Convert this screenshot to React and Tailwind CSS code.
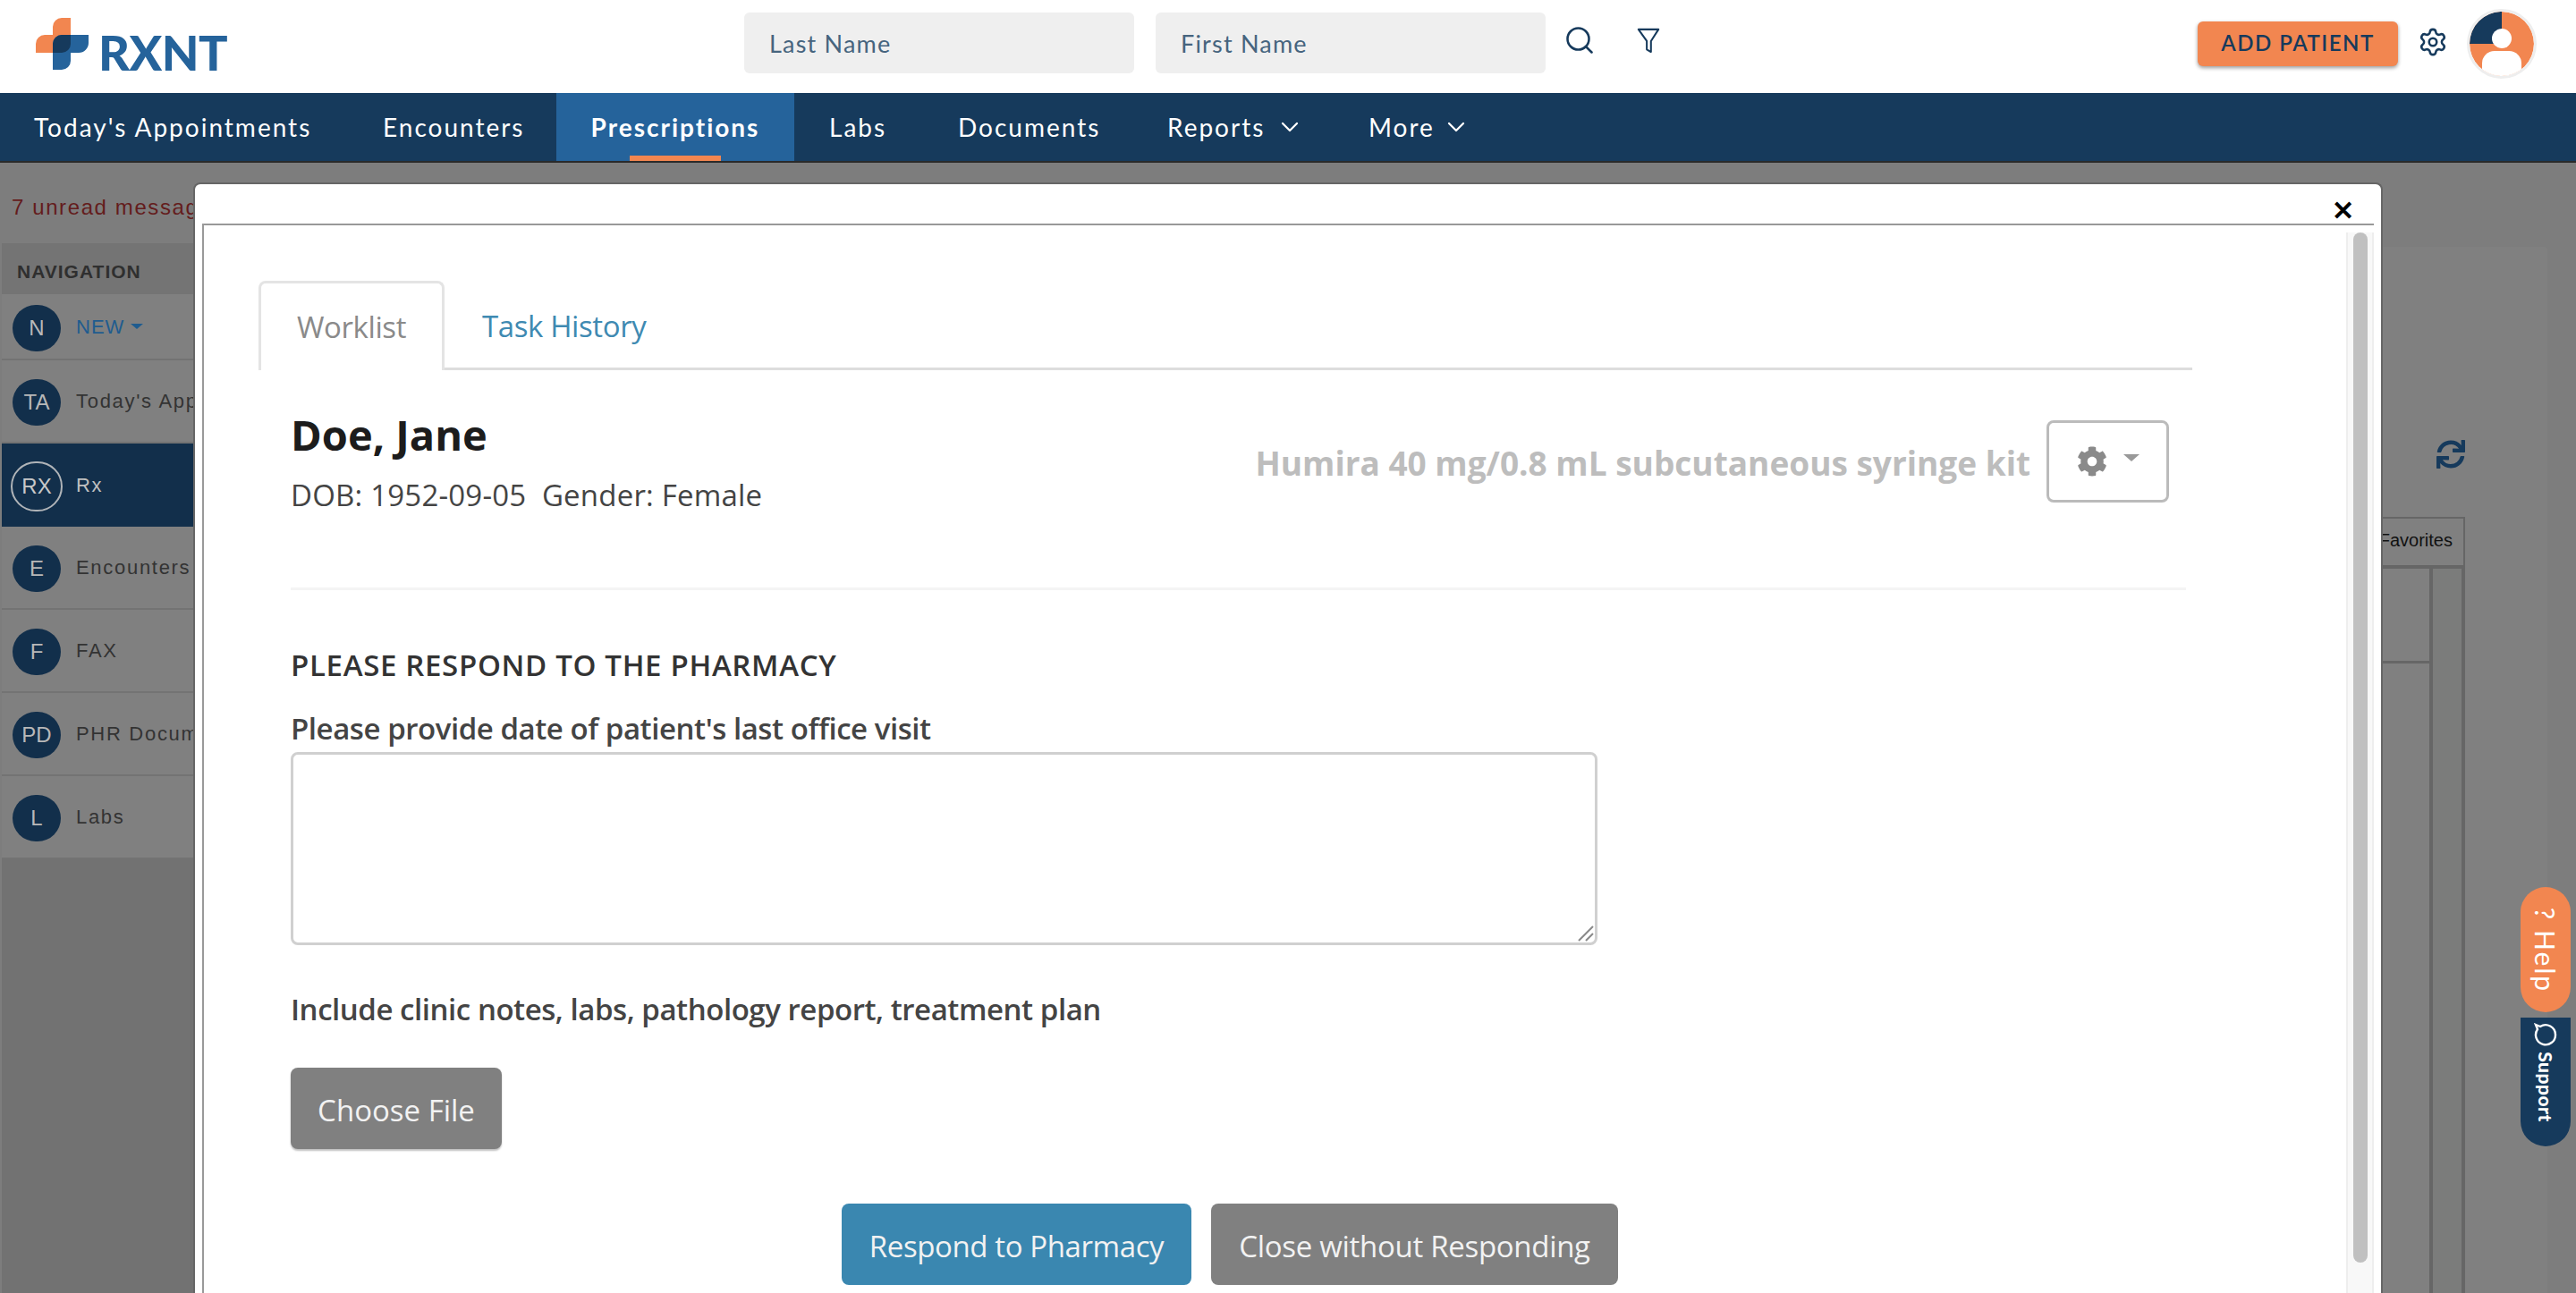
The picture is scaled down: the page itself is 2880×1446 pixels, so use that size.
import { ChevronDown, Settings, Search } from "lucide-react";
import { FaCog, FaSync } from "react-icons/fa";

const navItems = [
  { initials: "TA", label: "Today's Appointments" },
  { initials: "RX", label: "Rx", active: true },
  { initials: "E", label: "Encounters" },
  { initials: "F", label: "FAX" },
  { initials: "PD", label: "PHR Documents" },
  { initials: "L", label: "Labs" },
];

function Logo() {
  return (
    <div className="flex items-center ml-[40px] mt-[-6px]">
      <svg width="59" height="58" viewBox="0 0 59 58">
        <path d="M29 0h10v39H0V29a10 10 0 0 1 10-10h9V10A10 10 0 0 1 29 0z" fill="#f28650" />
        <path d="M29 19h30v9a11 11 0 0 1-11 11h-9v9a10 10 0 0 1-10 10H19V29a10 10 0 0 1 10-10z" fill="#25639b" />
        <path d="M29 19h10v10a10 10 0 0 1-10 10H19V29a10 10 0 0 1 10-10z" fill="#163a5c" />
      </svg>
      <span className="ml-[11px] mt-[19px] font-['Lato',sans-serif] font-black text-[54px] leading-[54px] tracking-[-0.5px] text-[#25639b]">RXNT</span>
    </div>
  );
}

function Header() {
  return (
    <header className="h-[104px] bg-white flex items-center font-['Lato',sans-serif]">
      <div className="w-[832px] shrink-0">
        <Logo />
      </div>
      <input placeholder="Last Name" className="w-[436px] h-[68px] mt-[-8px] rounded-[6px] bg-[#efefef] pl-[28px] text-[27px] tracking-[1.2px] placeholder:text-[#46647e]" />
      <input placeholder="First Name" className="w-[436px] h-[68px] mt-[-8px] ml-[24px] rounded-[6px] bg-[#efefef] pl-[28px] text-[27px] tracking-[1.2px] placeholder:text-[#46647e]" />
      <Search size={36} strokeWidth={1.7} className="ml-[20px] mt-[-14px] text-[#163a5c]" />
      <svg width="28" height="32" viewBox="0 0 30 32" fill="none" stroke="#163a5c" strokeWidth="2.2" strokeLinejoin="round" className="ml-[45px] mt-[-14px]">
        <path d="M3 3h24l-9 14v13l-5-3V17z" />
      </svg>
      <button className="ml-auto w-[224px] h-[50px] mt-[-6px] rounded-[6px] bg-[#f28650] text-[#163a5c] text-[24px] leading-[46px] pb-[2px] font-semibold tracking-[1.5px] shadow-[0_2px_4px_rgba(0,0,0,0.4)]">
        ADD PATIENT
      </button>
      <Settings size={34} strokeWidth={1.8} className="ml-[22px] mt-[-10px] text-[#163a5c]" />
      <div className="ml-[21px] mr-[44px] mt-[-6px] w-[78px] h-[78px] rounded-full border-[3px] border-[#eeeeee] overflow-hidden">
        <svg width="72" height="72" viewBox="0 0 72 72">
          <circle cx="36" cy="36" r="36" fill="#f28650" />
          <path d="M36 36V0A36 36 0 0 0 0 36z" fill="#163a5c" />
          <circle cx="36" cy="30" r="11" fill="#fff" />
          <rect x="14" y="44" width="44" height="40" rx="14" fill="#fff" />
        </svg>
      </div>
    </header>
  );
}

function TopNav() {
  return (
    <nav className="h-[78px] bg-[#163a5c] border-b-[2px] border-[#2a2a2a] flex text-white text-[28px] tracking-[2px] font-['Lato',sans-serif]">
      <a className="ml-[38px] w-[390px] flex items-center">Today's Appointments</a>
      <a className="w-[194px] flex items-center">Encounters</a>
      <a className="relative w-[266px] flex items-center justify-center bg-[#25639b] font-bold">
        Prescriptions
        <span className="absolute left-[82px] bottom-0 w-[102px] h-[6px] bg-[#f28650]" />
      </a>
      <a className="ml-[39px] w-[144px] flex items-center">Labs</a>
      <a className="w-[234px] flex items-center">Documents</a>
      <a className="w-[225px] flex items-center">
        Reports
        <ChevronDown size={32} strokeWidth={1.7} className="ml-[12px]" />
      </a>
      <a className="flex items-center">
        More
        <ChevronDown size={32} strokeWidth={1.7} className="ml-[8px]" />
      </a>
    </nav>
  );
}

function Circle({ initials, active }) {
  return (
    <span className={active
      ? "w-[58px] h-[56px] ml-[10px] mt-[3px] rounded-full border-[2px] border-[#b0b4b8] flex items-center justify-center text-[24px] text-[#c8c8c8] shrink-0"
      : "w-[54px] h-[52px] ml-[12px] mt-[3px] rounded-full bg-[#122f4b] flex items-center justify-center text-[24px] text-[#b8b8b8] shrink-0"}>
      {initials}
    </span>
  );
}

function Sidebar() {
  return (
    <aside className="w-[218px] shrink-0 flex flex-col font-['Liberation_Sans',sans-serif]">
      <div className="h-[90px] pl-[13px] pt-[36px] text-[24px] leading-[28px] tracking-[1.6px] text-[#641c1c] whitespace-nowrap">7 unread messages</div>
      <div className="h-[57px] ml-[2px] bg-[#747474] pl-[17px] pt-[6px] flex items-center text-[21px] font-bold tracking-[1px] text-[#2f2f2f]">NAVIGATION</div>
      <div className="h-[74px] ml-[2px] flex items-center border-b-[2px] border-[#737373] bg-[#808080]">
        <Circle initials="N" />
        <span className="ml-[17px] text-[22px] tracking-[1px] text-[#1f5c8f]">NEW</span>
        <span className="ml-[7px] border-x-[7px] border-t-[6px] border-x-transparent border-t-[#1f5c8f]" />
      </div>
      {navItems.map((item) => (
        <div
          key={item.initials}
          className={item.active
            ? "h-[93px] ml-[2px] flex items-center bg-[#122f4b] whitespace-nowrap"
            : "h-[93px] ml-[2px] flex items-center border-b-[2px] border-[#737373] bg-[#808080] whitespace-nowrap"}
        >
          <Circle initials={item.initials} active={item.active} />
          <span className={item.active
            ? "ml-[15px] text-[22px] tracking-[1.7px] text-[#c0c0c0]"
            : "ml-[17px] text-[22px] tracking-[1.7px] text-[#333333]"}>
            {item.label}
          </span>
        </div>
      ))}
      <div className="flex-1 ml-[2px] bg-[#727272]" />
    </aside>
  );
}

function MainBehind() {
  return (
    <main className="flex-1 relative">
      <div className="absolute right-[32px] top-[94px] bottom-0 left-0 bg-[#808080] rounded-t-[4px]" />
      <FaSync size={32} className="absolute left-[2506px] top-[310px] text-[#163a5c]" />
      <div className="absolute left-[2444px] top-[396px] w-[94px] h-[58px] border-[2px] border-b-[4px] border-[#666666] flex items-center justify-end pr-[12px] pb-[4px] text-[20px] text-[#111111] font-['Liberation_Sans',sans-serif]">Favorites</div>
      <div className="absolute left-[2498px] top-[454px] bottom-0 w-[40px] border-x-[4px] border-[#666666] bg-[#7b7c7b]" />
      <div className="absolute left-[2444px] top-[557px] w-[54px] h-[3px] bg-[#666666]" />
    </main>
  );
}

function Modal() {
  return (
    <div className="absolute left-[216px] top-[22px] w-[2448px] h-[1300px] bg-white rounded-t-[8px] border-[2px] border-b-0 border-[#666666] pt-[44px] pl-[8px] pr-[8px] font-['Open_Sans',sans-serif]">
      <span className="absolute right-[30px] top-[15px] text-[30px] leading-[30px] font-bold text-black font-['Liberation_Sans',sans-serif]">✕</span>
      <div className="relative h-full border-t-[2px] border-l-[2px] border-[#999999] pt-[62px] pl-[61px]">
        <div className="absolute right-0 top-[8px] bottom-0 w-[31px] bg-[#f8f8f8] border-x-[2px] border-[#eeeeee] flex justify-center">
          <div className="w-[16px] h-[1152px] rounded-full bg-[#c0c0c0]" />
        </div>

        <div className="w-[2162px] h-[100px] flex border-b-[3px] border-[#dddddd] text-[33px] tracking-[-0.4px]">
          <div className="w-[208px] h-[100px] rounded-t-[8px] border-[3px] border-b-0 border-[#e4e4e4] bg-white flex items-center justify-center text-[#8a8a8a]">Worklist</div>
          <div className="ml-[42px] h-[100px] pt-[2px] flex items-center text-[#3f8ab2]">Task History</div>
        </div>

        <div className="w-[2119px] h-[246px] ml-[36px] border-b-[3px] border-[#f4f4f4] flex justify-between">
          <div>
            <div className="mt-[42px] text-[47px] leading-[60px] font-bold text-[#1c1c1c]">Doe, Jane</div>
            <div className="mt-[15px] text-[33px] leading-[46px] tracking-[0.2px] text-[#444444] whitespace-pre">DOB: 1952-09-05  Gender: Female</div>
          </div>
          <div className="flex items-start mr-[19px] mt-[56px]">
            <span className="mt-[26px] text-[37px] leading-[44px] font-bold text-[#bdbdbd]">Humira 40 mg/0.8 mL subcutaneous syringe kit</span>
            <button className="ml-[18px] w-[137px] h-[92px] rounded-[8px] border-[3px] border-[#bbbbbb] flex items-center justify-center gap-[18px] text-[#8a8a8a]">
              <FaCog size={34} />
              <span className="border-x-[9px] border-t-[8px] border-x-transparent border-t-[#999999] mb-[8px]" />
            </button>
          </div>
        </div>

        <div className="ml-[36px] mt-[62px] text-[33px] leading-[44px] font-semibold tracking-[0.67px] text-[#333333] whitespace-nowrap">PLEASE RESPOND TO THE PHARMACY</div>
        <div className="ml-[36px] mt-[27px] text-[33px] leading-[44px] font-semibold tracking-[-0.45px] text-[#444444] whitespace-nowrap">Please provide date of patient's last office visit</div>
        <div className="relative ml-[36px] mt-[4px] w-[1461px] h-[216px]">
          <textarea className="block w-full h-full rounded-[8px] border-[3px] border-[#d0d0d0] resize-none"></textarea>
          <svg width="24" height="24" viewBox="0 0 24 24" stroke="#8a8a8a" strokeWidth="2" className="absolute right-[3px] bottom-[3px]">
            <path d="M22 6 6 22M22 14l-8 8" />
          </svg>
        </div>
        <div className="ml-[36px] mt-[50px] text-[33px] leading-[44px] font-semibold tracking-[-0.45px] text-[#444444] whitespace-nowrap">Include clinic notes, labs, pathology report, treatment plan</div>
        <button className="block ml-[36px] mt-[43px] w-[236px] h-[91px] pt-[4px] rounded-[8px] bg-[#808080] text-[33px] text-[#f2f2f2] shadow-[0_2px_2px_rgba(0,0,0,0.25)]">Choose File</button>
        <div className="ml-[652px] mt-[61px] flex gap-[22px] text-[33px] text-[#f2f2f2]">
          <button className="w-[391px] h-[91px] pt-[4px] rounded-[8px] bg-[#3a87b0] tracking-[-0.4px]">Respond to Pharmacy</button>
          <button className="w-[455px] h-[91px] pt-[4px] rounded-[8px] bg-[#808080] tracking-[-0.3px]">Close without Responding</button>
        </div>
      </div>
    </div>
  );
}

export default function App() {
  return (
    <div className="relative w-[2880px] h-[1446px] overflow-hidden bg-white">
      <Header />
      <TopNav />
      <div className="relative h-[1264px] flex bg-[#7d7d7d]">
        <Sidebar />
        <MainBehind />
        <Modal />
        <div className="absolute right-[6px] top-[810px] w-[56px] h-[140px] rounded-full bg-[#f28650] flex items-center justify-center">
          <span className="rotate-90 whitespace-nowrap text-white text-[30px] tracking-[2px] font-['Lato',sans-serif]">? Help</span>
        </div>
        <div className="absolute right-[6px] top-[956px] w-[56px] h-[144px] rounded-b-full bg-[#163a5c] flex flex-col items-center pt-[6px] text-white">
          <svg width="26" height="26" viewBox="0 0 26 26" fill="none" stroke="currentColor" strokeWidth="2.4" className="rotate-90">
            <path d="M13 2a11 11 0 1 1-6 20l-5 2 2-5A11 11 0 0 1 13 2z" />
          </svg>
          <span className="mt-[32px] rotate-90 whitespace-nowrap text-[21px] leading-[27px] font-black tracking-[0.5px] font-['Lato',sans-serif]">Support</span>
        </div>
      </div>
    </div>
  );
}
